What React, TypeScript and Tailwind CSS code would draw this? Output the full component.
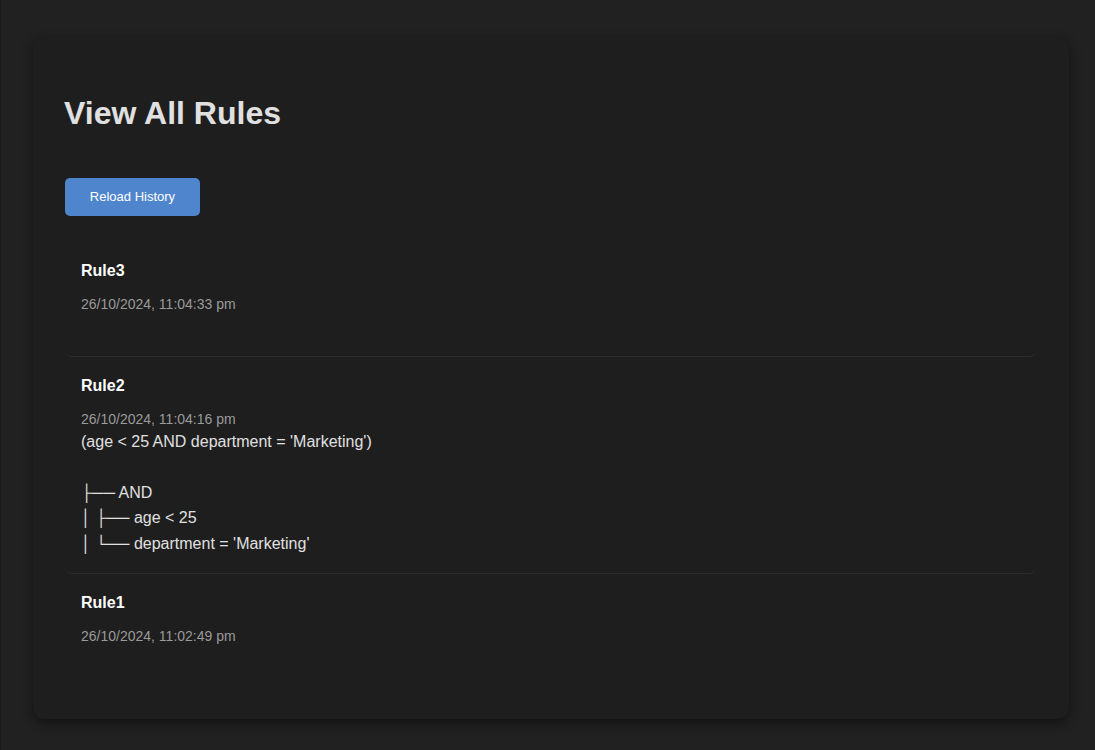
const rules = [
  { name: "Rule3", date: "26/10/2024, 11:04:33 pm", text: "" },
  {
    name: "Rule2",
    date: "26/10/2024, 11:04:16 pm",
    text: "(age < 25 AND department = 'Marketing')\n\n├── AND\n│ ├── age < 25\n│ └── department = 'Marketing'",
  },
  { name: "Rule1", date: "26/10/2024, 11:02:49 pm", text: "" },
];

export default function App() {
  return (
    <div
      className="min-h-screen bg-[#212121] border-l border-[#1a1a1a] pt-[37px] pl-[32px] pr-[26px] pb-8"
      style={{ fontFamily: '"Liberation Sans", Arial, sans-serif' }}
    >
      <div className="rounded-xl bg-[#1e1e1e] pl-[31px] pr-8 pt-8 pb-8 shadow-[0_4px_12px_rgba(0,0,0,0.45)]">
        {/* Header */}
        <h1 className="mt-6 text-[32px] leading-10 font-bold text-[#e0e0e0]">View All Rules</h1>

        <button className="mt-[45px] ml-px h-[38px] w-[135px] rounded-[5px] bg-[#4f85cd] text-[13px] font-medium text-white">
          Reload History
        </button>

        {/* Rules */}
        <ul className="mt-[26px]">
          {rules.map((r, i) => (
            <li
              key={r.name}
              className={
                i < rules.length - 1
                  ? "rounded-lg border-b border-[#2c2c2c] pl-[17px] pr-4 pt-[17px] pb-4"
                  : "rounded-lg pl-[17px] pr-4 pt-[17px] pb-4"
              }
            >
              <h3 className="mb-[11px] text-base leading-6 font-bold text-white">{r.name}</h3>
              <p className="text-sm leading-5 text-[#9a9a9a]">{r.date}</p>
              <pre
                className="whitespace-pre-wrap text-base leading-[1.6] text-[#e0e0e0]"
                style={{ fontFamily: '"Liberation Sans", Arial, sans-serif' }}
              >
                {r.text || "\u00a0"}
              </pre>
            </li>
          ))}
        </ul>
      </div>
    </div>
  );
}
